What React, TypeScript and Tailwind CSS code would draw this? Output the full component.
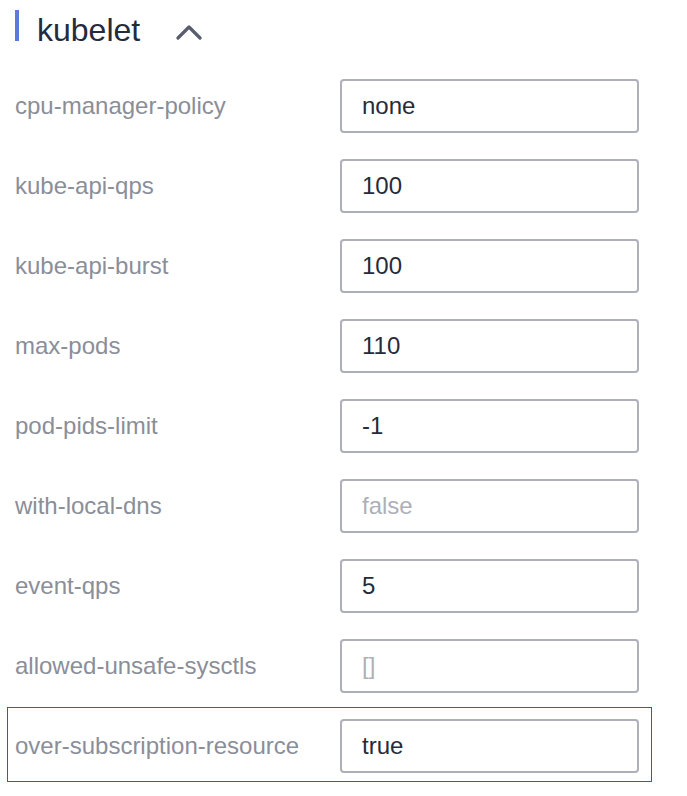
import React from "react";

type Field = { name: string; value?: string; placeholder?: string };

const fields: Field[] = [
  { name: "cpu-manager-policy", value: "none" },
  { name: "kube-api-qps", value: "100" },
  { name: "kube-api-burst", value: "100" },
  { name: "max-pods", value: "110" },
  { name: "pod-pids-limit", value: "-1" },
  { name: "with-local-dns", placeholder: "false" },
  { name: "event-qps", value: "5" },
  { name: "allowed-unsafe-sysctls", placeholder: "[]" },
];

function Row({ field }: { field: Field }) {
  return (
    <div className="flex items-center h-[54px]">
      <div className="w-[325px] text-[24px] text-[#8a8e99]">{field.name}</div>
      <input
        readOnly
        defaultValue={field.value}
        placeholder={field.placeholder}
        className="w-[299px] h-[54px] border-2 border-[#adb0b8] rounded-[4px] pl-[20px] text-[24px] text-[#252b3a] placeholder:text-[#adb0b8] outline-none bg-white"
      />
    </div>
  );
}

export default function App() {
  return (
    <div
      className="min-h-screen bg-white px-[15px]"
      style={{ fontFamily: '"Liberation Sans", Arial, sans-serif' }}
    >
      <div className="flex items-start">
        <div className="w-[4px] h-[31px] mt-[10px] bg-[#5b7be0]" />
        <div className="ml-[18px] mt-[14px] text-[32px] leading-none text-[#252b3a]">kubelet</div>
        <svg className="ml-[36px] mt-[24px]" width="26" height="16" viewBox="0 0 26 16">
          <polyline
            points="2,14 13,3 24,14"
            fill="none"
            stroke="#575d6c"
            strokeWidth="3.2"
            strokeLinecap="round"
            strokeLinejoin="round"
          />
        </svg>
      </div>

      <div className="flex flex-col gap-[26px] mt-[33px]">
        {fields.map((f) => (
          <Row key={f.name} field={f} />
        ))}
      </div>

      {/* highlighted row */}
      <div className="mt-[14px] -ml-[8px] w-[645px] border border-[#e02020] pl-[7px] pt-[11px] pb-[8px]">
        <Row field={{ name: "over-subscription-resource", value: "true" }} />
      </div>
    </div>
  );
}
